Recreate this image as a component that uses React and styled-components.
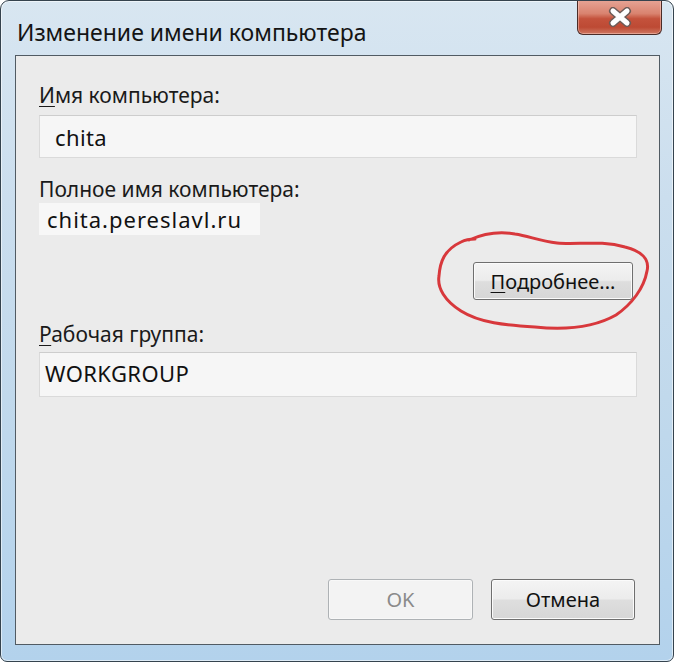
import React from "react"
import styled, { createGlobalStyle } from "styled-components"

const GlobalStyle = createGlobalStyle`
  body {
    margin: 0;
    background: #ffffff;
    font-family: "Noto Sans", "DejaVu Sans", sans-serif;
  }
`

const Window = styled.div`
  width: 674px;
  height: 662px;
  box-sizing: border-box;
  display: flex;
  flex-direction: column;
  border: 1px solid #35434e;
  border-radius: 9px 9px 7px 7px;
  padding: 0 13px 16px 14px;
  background: linear-gradient(180deg, #d8e6f1 0%, #cbdeee 30%, #c1d9ec 60%, #b3d2ec 100%);
  box-shadow: inset 0 0 0 1px rgba(255, 255, 255, 0.55);
  overflow: hidden;
`

const TitleBar = styled.div`
  height: 54px;
  display: flex;
  align-items: flex-start;
  justify-content: space-between;
  flex-shrink: 0;
`

const Title = styled.div`
  margin: 16px 0 0 2px;
  font-size: 23px;
  line-height: 30px;
  color: #141414;
`

const CloseButton = styled.div`
  width: 85px;
  height: 35px;
  margin: -1px -2px 0 0;
  box-sizing: border-box;
  border: 1px solid #4a2c28;
  border-top: none;
  border-radius: 0 0 6px 6px;
  background: linear-gradient(180deg, #e6a596 0%, #d9836f 40%, #c4523c 55%, #bd4a34 80%, #cf7862 100%);
  box-shadow: inset 0 0 0 1px rgba(255, 215, 205, 0.45);
  display: flex;
  align-items: center;
  justify-content: center;
`

const Panel = styled.div`
  flex: 1;
  display: flex;
  flex-direction: column;
  border: 1px solid #515b63;
  background: #ebebeb;
  padding: 27px 22px 24px 23px;
`

const Label = styled.div`
  font-size: 21px;
  line-height: 24px;
  color: #1a1a1a;
  margin-top: ${(p) => p.$top || 0}px;

  u {
    text-decoration-thickness: 1px;
    text-underline-offset: 3px;
  }
`

const Input = styled.div`
  margin-top: ${(p) => p.$top}px;
  height: ${(p) => p.$height}px;
  box-sizing: border-box;
  border: 1px solid #dadada;
  border-top-color: #cdcdcd;
  background: #f6f6f6;
  display: flex;
  align-items: center;
  padding: 0 0 ${(p) => p.$lift || 0}px ${(p) => p.$pad}px;
  font-size: 22px;
  letter-spacing: 0.4px;
  color: #111;
`

const Value = styled.div`
  margin-top: 2px;
  width: 221px;
  height: 32px;
  box-sizing: border-box;
  background: #f7f7f7;
  display: flex;
  align-items: center;
  padding-left: 8px;
  font-size: 22px;
  color: #111;
  letter-spacing: 1px;
`

const ButtonRow = styled.div`
  display: flex;
  justify-content: flex-end;
  margin-top: ${(p) => p.$top || 0}px;
  padding-right: ${(p) => p.$right || 0}px;
  gap: 18px;
`

const Footer = styled(ButtonRow)`
  margin-top: auto;
`

const Button = styled.div`
  position: relative;
  width: ${(p) => p.$width}px;
  height: ${(p) => p.$height}px;
  box-sizing: border-box;
  border: 1px solid ${(p) => (p.$disabled ? "#aeb2b5" : "#6f6f6f")};
  border-radius: 3px;
  background: ${(p) =>
    p.$disabled
      ? "#f3f3f3"
      : "linear-gradient(180deg, #f4f4f4 0%, #ececec 48%, #dedede 52%, #d6d6d6 100%)"};
  box-shadow: inset 0 0 0 1px ${(p) => (p.$disabled ? "#f8f8f8" : "#fbfbfb")};
  display: flex;
  align-items: center;
  justify-content: center;
  font-size: 20px;
  color: ${(p) => (p.$disabled ? "#8a8a8a" : "#111")};

  u {
    text-decoration-thickness: 1px;
    text-underline-offset: 3px;
  }
`

const Scribble = styled.svg`
  position: absolute;
  left: -39px;
  top: -31px;
  width: 215px;
  height: 100px;
  overflow: visible;
  pointer-events: none;
`

function CloseIcon() {
  return (
    <svg width="24" height="20" viewBox="0 0 24 20">
      <g strokeLinecap="round">
        <path d="M5 4 L19 16 M19 4 L5 16" stroke="#6d5c58" strokeWidth="8" />
        <path d="M5 4 L19 16 M19 4 L5 16" stroke="#ffffff" strokeWidth="5" />
      </g>
    </svg>
  )
}

export default function App() {
  return (
    <>
      <GlobalStyle />
      <Window>
        <TitleBar>
          <Title>Изменение имени компьютера</Title>
          <CloseButton>
            <CloseIcon />
          </CloseButton>
        </TitleBar>
        <Panel>
          <Label>
            <u>И</u>мя компьютера:
          </Label>
          <Input $top={8} $height={43} $pad={15}>
            chita
          </Input>

          <Label $top={19}>Полное имя компьютера:</Label>
          <Value>chita.pereslavl.ru</Value>

          <ButtonRow $top={27} $right={4}>
            <Button $width={160} $height={38}>
              <span>
                <u>П</u>одробнее...
              </span>
              <Scribble viewBox="0 0 215 100">
                <path
                  d="M34 8 C50 1 64 -1 80 2 C94 4 104 9 122 11 C142 13 166 8 190 15 C206 19 215 27 212 39 C209 56 197 72 181 83 C160 95 130 98 100 95 C70 93 45 91 26 79 C10 69 2 56 4 44 C5 30 9 18 26 10 C30 8 36 7 40 7"
                  fill="none"
                  stroke="#d8383c"
                  strokeWidth="3"
                  strokeLinecap="round"
                  strokeLinejoin="round"
                />
              </Scribble>
            </Button>
          </ButtonRow>

          <Label $top={22}>
            <u>Р</u>абочая группа:
          </Label>
          <Input $top={6} $height={45} $pad={5} $lift={4}>
            WORKGROUP
          </Input>

          <Footer $right={2}>
            <Button $width={145} $height={41} $disabled>
              OK
            </Button>
            <Button $width={144} $height={41}>
              Отмена
            </Button>
          </Footer>
        </Panel>
      </Window>
    </>
  )
}
